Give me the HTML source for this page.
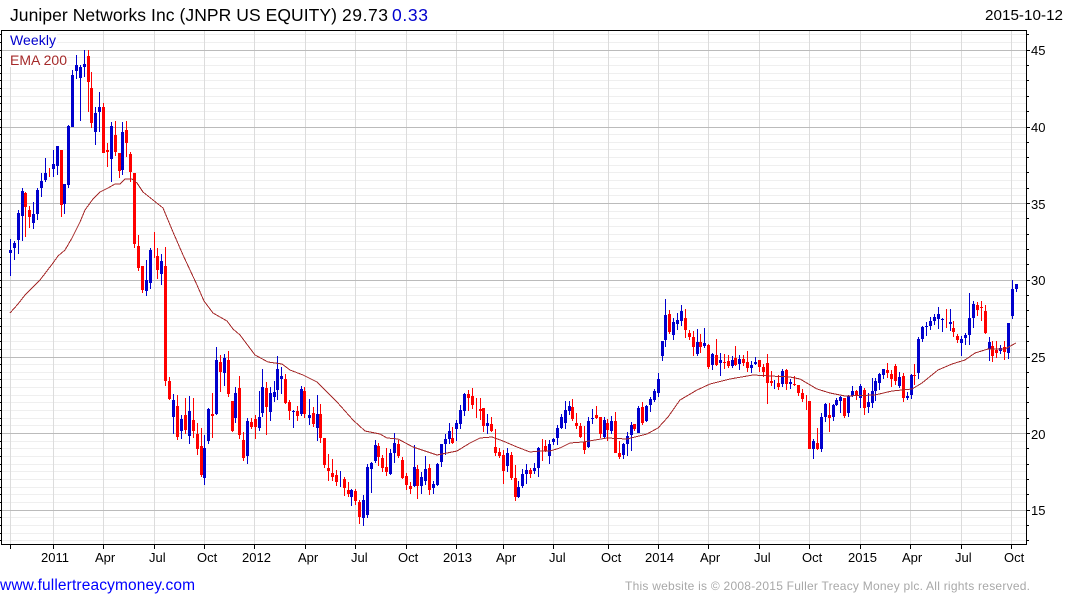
<!DOCTYPE html>
<html><head><meta charset="utf-8"><title>JNPR</title>
<style>html,body{margin:0;padding:0;background:#fff}svg{display:block}text{font-family:"Liberation Sans",Arial,sans-serif}</style></head>
<body>
<svg width="1075" height="600" viewBox="0 0 1075 600" xmlns="http://www.w3.org/2000/svg">
<rect width="1075" height="600" fill="#fff"/>
<g shape-rendering="crispEdges" fill="none">
<path stroke="#efefef" d="M2 34.5H1026M2 42.5H1026M2 57.5H1026M2 65.5H1026M2 73.5H1026M2 80.5H1026M2 88.5H1026M2 96.5H1026M2 103.5H1026M2 111.5H1026M2 119.5H1026M2 134.5H1026M2 142.5H1026M2 149.5H1026M2 157.5H1026M2 165.5H1026M2 172.5H1026M2 180.5H1026M2 188.5H1026M2 195.5H1026M2 211.5H1026M2 218.5H1026M2 226.5H1026M2 234.5H1026M2 241.5H1026M2 249.5H1026M2 257.5H1026M2 264.5H1026M2 272.5H1026M2 287.5H1026M2 295.5H1026M2 303.5H1026M2 310.5H1026M2 318.5H1026M2 326.5H1026M2 333.5H1026M2 341.5H1026M2 349.5H1026M2 364.5H1026M2 372.5H1026M2 379.5H1026M2 387.5H1026M2 395.5H1026M2 402.5H1026M2 410.5H1026M2 418.5H1026M2 425.5H1026M2 441.5H1026M2 448.5H1026M2 456.5H1026M2 464.5H1026M2 471.5H1026M2 479.5H1026M2 487.5H1026M2 494.5H1026M2 502.5H1026M2 517.5H1026M2 525.5H1026M2 533.5H1026M2 540.5H1026"/>
<path stroke="#dcdcdc" d="M10.5 31V544M53.5 31V544M103.5 31V544M154.5 31V544M204.5 31V544M254.5 31V544M305.5 31V544M355.5 31V544M406.5 31V544M456.5 31V544M503.5 31V544M553.5 31V544M608.5 31V544M658.5 31V544M708.5 31V544M759.5 31V544M809.5 31V544M860.5 31V544M910.5 31V544M961.5 31V544M1011.5 31V544"/>
<rect x="2" y="31" width="55" height="19" fill="#fff"/>
<rect x="2" y="50" width="65" height="17" fill="#fff"/>
<path stroke="#bbb" d="M2 50.5H1026M2 127.5H1026M2 203.5H1026M2 280.5H1026M2 357.5H1026M2 433.5H1026M2 510.5H1026"/>
<!-- blue wicks -->
<path stroke="#0000cd" d="M10.5 239V276M14.5 241V260M18.5 210V254M22.5 188V241M33.5 202V229M37.5 188V220M41.5 173V197M45.5 158V182M53.5 150V177M57.5 146V175M64.5 184V214M68.5 125V188M72.5 70V127M76.5 55V79M80.5 65V121M84.5 50V77M95.5 107V145M99.5 92V132M111.5 122V182M122.5 122V175M146.5 260V296M150.5 248V289M161.5 254V285M173.5 394V434M181.5 415V439M189.5 396V444M204.5 435V485M208.5 408V444M216.5 347V415M224.5 354V386M235.5 387V423M247.5 418V464M259.5 391V431M262.5 369V417M270.5 387V421M274.5 381V402M277.5 356V400M281.5 367V394M293.5 410V428M301.5 386V416M309.5 399V425M317.5 395V441M340.5 471V487M351.5 489V506M363.5 495V526M367.5 464V518M371.5 462V493M375.5 440V463M390.5 449V475M394.5 433V463M414.5 445V487M421.5 472V494M425.5 456V485M433.5 481V494M437.5 463V486M441.5 444V467M445.5 434V455M449.5 423V444M456.5 420V441M460.5 405V429M464.5 393V416M487.5 414V434M507.5 448V472M518.5 481V498M522.5 469V488M526.5 464V484M534.5 463V474M538.5 447V477M549.5 440V464M553.5 438V445M557.5 425V445M561.5 414V429M565.5 401V429M569.5 401V415M588.5 417V448M592.5 409V424M604.5 417V439M611.5 416V434M623.5 443V459M627.5 432V456M631.5 422V451M638.5 406V433M646.5 405V422M650.5 397V412M654.5 389V402M658.5 373V397M662.5 341V361M665.5 299V347M673.5 318V340M677.5 313V330M681.5 305V326M697.5 329V356M704.5 328V348M712.5 353V370M720.5 353V376M732.5 356V368M739.5 355V370M751.5 361V373M755.5 357V365M774.5 380V389M782.5 369V387M790.5 379V389M813.5 439V459M821.5 413V452M825.5 403V422M833.5 404V421M836.5 398V406M840.5 396V413M848.5 395V417M852.5 386V397M860.5 384V408M868.5 393V413M872.5 378V408M875.5 378V401M879.5 373V390M883.5 369V379M899.5 372V388M907.5 392V400M911.5 374V399M918.5 337V379M922.5 326V342M926.5 322V336M930.5 317V330M934.5 314V325M938.5 307V329M942.5 318V332M950.5 309V331M961.5 336V356M965.5 333V345M969.5 293V345M973.5 301V328M989.5 337V361M1000.5 345V354M1008.5 323V359M1012.5 280V319M1016.5 284V292"/>
<!-- red wicks -->
<path stroke="#ff0000" d="M25.5 192V237M29.5 206V228M49.5 168V177M61.5 150V217M88.5 50V112M91.5 72V128M103.5 103V153M107.5 143V167M115.5 121V156M119.5 153V178M126.5 121V157M130.5 152V182M134.5 173V248M138.5 235V271M142.5 266V293M154.5 232V258M157.5 248V279M165.5 247V386M169.5 377V400M177.5 395V440M185.5 398V434M193.5 398V438M197.5 423V455M201.5 428V477M212.5 393V438M220.5 355V392M228.5 351V397M232.5 401V432M239.5 376V439M243.5 432V461M251.5 418V429M255.5 415V439M266.5 382V435M285.5 374V404M289.5 400V420M297.5 406V421M304.5 387V418M313.5 407V427M320.5 404V443M324.5 438V468M328.5 454V481M332.5 459V481M336.5 470V486M344.5 477V496M348.5 482V497M355.5 489V505M359.5 500V524M378.5 443V466M382.5 455V472M386.5 448V476M398.5 440V458M402.5 457V479M406.5 473V490M410.5 482V494M417.5 465V499M429.5 464V495M452.5 427V444M468.5 390V411M472.5 388V409M476.5 398V418M480.5 398V420M483.5 408V432M491.5 417V432M495.5 429V456M499.5 448V458M503.5 450V484M511.5 452V480M515.5 465V501M530.5 468V478M542.5 439V461M545.5 440V452M572.5 399V421M576.5 413V429M580.5 423V438M584.5 426V454M596.5 406V419M600.5 417V438M607.5 419V441M615.5 412V453M619.5 441V459M634.5 424V431M642.5 402V425M669.5 310V334M685.5 309V338M689.5 330V340M693.5 331V356M700.5 334V353M708.5 344V369M716.5 339V366M724.5 354V369M728.5 355V368M735.5 346V366M743.5 355V366M747.5 351V372M759.5 360V372M763.5 364V377M767.5 354V404M771.5 371V386M778.5 375V390M786.5 369V390M794.5 376V386M798.5 385V396M802.5 389V402M806.5 395V410M809.5 401V449M817.5 428V450M829.5 403V432M844.5 398V418M856.5 390V400M864.5 388V415M887.5 363V378M891.5 370V387M895.5 364V385M903.5 373V402M914.5 364V385M946.5 309V328M953.5 321V337M957.5 334V343M977.5 302V316M981.5 301V321M985.5 305V334M992.5 341V362M996.5 341V358M1004.5 341V360"/>
<!-- blue bodies -->
<path stroke="#0000cd" stroke-width="3" d="M10.5 250V253M14.5 243V248M18.5 213V240M22.5 191V216M33.5 214V223M37.5 190V214M41.5 181V188M45.5 173V180M53.5 164V169M57.5 146V166M64.5 184V204M68.5 126V185M72.5 75V127M76.5 65V71M80.5 67V78M84.5 64V67M95.5 113V132M99.5 107V112M111.5 126V159M122.5 132V170M146.5 280V291M150.5 250V283M161.5 261V274M173.5 400V417M181.5 419V431M189.5 411V436M204.5 448V478M208.5 409V441M216.5 360V414M224.5 358V373M235.5 393V418M247.5 421V456M259.5 417V428M262.5 387V413M270.5 393V412M274.5 392V397M277.5 369V390M281.5 376V379M293.5 411V412M301.5 389V414M309.5 415V418M317.5 414V428M351.5 490V497M363.5 500V518M367.5 467V515M371.5 463V469M375.5 445V461M390.5 453V474M394.5 443V453M414.5 467V486M421.5 477V486M425.5 469V481M433.5 484V488M437.5 464V485M441.5 444V462M445.5 439V444M449.5 431V439M456.5 423V429M460.5 410V424M464.5 394V411M487.5 423V426M507.5 453V466M518.5 487V497M522.5 474V486M526.5 470V474M534.5 468V471M538.5 448V468M549.5 444V456M553.5 439V442M557.5 428V438M561.5 417V428M565.5 410V423M569.5 406V411M588.5 421V447M592.5 418V419M604.5 420V437M611.5 421V431M623.5 444V455M627.5 436V444M631.5 425V435M638.5 408V433M646.5 406V421M650.5 399V405M654.5 391V400M658.5 379V393M662.5 341V356M665.5 315V340M673.5 322V335M677.5 320V324M681.5 311V321M697.5 342V354M704.5 343V346M712.5 354V365M720.5 360V363M732.5 360V366M739.5 359V364M751.5 365V368M755.5 362V364M782.5 371V384M790.5 382V384M813.5 441V449M821.5 417V449M825.5 404V417M833.5 405V417M836.5 400V405M840.5 397V401M848.5 396V413M852.5 391V396M860.5 386V398M868.5 402V407M872.5 391V403M875.5 381V391M879.5 374V383M883.5 369V375M899.5 377V386M907.5 396V398M911.5 375V395M918.5 339V373M922.5 327V339M926.5 326V327M930.5 321V326M934.5 317V321M938.5 314V319M942.5 319V320M950.5 322V324M961.5 339V343M965.5 335V338M969.5 318V335M973.5 304V318M989.5 342V349M1000.5 348V351M1008.5 323V353M1012.5 289V316M1016.5 284V289"/>
<!-- red bodies -->
<path stroke="#ff0000" stroke-width="3" d="M25.5 193V207M29.5 210V217M61.5 150V205M88.5 56V82M91.5 88V123M103.5 107V153M107.5 150V152M115.5 135V152M119.5 153V171M126.5 130V143M130.5 154V172M134.5 173V244M138.5 246V268M142.5 266V290M157.5 256V270M165.5 266V381M169.5 381V399M177.5 406V437M185.5 415V430M193.5 420V431M197.5 434V449M201.5 446V475M212.5 414V416M220.5 362V372M228.5 360V394M232.5 401V431M239.5 388V435M243.5 440V458M251.5 422V427M255.5 419V427M266.5 388V407M285.5 379V403M289.5 402V411M297.5 411V416M304.5 391V414M313.5 413V424M320.5 414V438M324.5 438V465M328.5 468V471M332.5 473V477M336.5 475V482M344.5 479V488M348.5 490V494M355.5 491V501M359.5 502V517M378.5 446V457M382.5 458V468M386.5 467V472M398.5 444V456M402.5 460V478M406.5 476V485M410.5 486V489M417.5 469V486M429.5 468V490M452.5 438V443M468.5 394V398M472.5 396V405M480.5 409V411M483.5 408V426M491.5 424V431M495.5 447V453M499.5 452V456M503.5 455V471M511.5 455V478M515.5 478V497M530.5 470V474M545.5 446V451M572.5 407V419M576.5 423V426M580.5 426V437M584.5 442V450M596.5 415V418M600.5 417V434M607.5 423V430M615.5 421V453M619.5 453V457M634.5 424V429M642.5 407V423M669.5 314V332M685.5 318V330M689.5 333V337M693.5 337V347M700.5 342V347M708.5 345V367M716.5 355V365M724.5 362V363M728.5 361V366M735.5 358V365M743.5 359V363M747.5 362V368M759.5 360V367M763.5 367V372M767.5 363V383M771.5 381V383M778.5 383V387M786.5 370V384M794.5 384V385M798.5 385V393M802.5 393V399M809.5 401V449M817.5 443V449M829.5 415V418M844.5 398V416M856.5 391V396M864.5 390V408M887.5 370V373M891.5 374V379M895.5 366V381M903.5 376V398M914.5 375V376M953.5 328V332M957.5 336V340M977.5 305V310M981.5 307V308M985.5 311V333M992.5 346V356M996.5 350V353M1004.5 347V352"/>
<!-- EMA -->
<polyline stroke="#a52a2a" points="10,313 18,304 25,295 40,280 53,263 58,256 65,250 72,238 80,222 85,210 93,199 100,192 108,188 115,184 120,184 125,179 132,179 137,183 143,192 153,200 163,208 173,232 183,255 197,285 204,301 213,313 227,321 233,329 240,335 255,355 268,362 282,364 290,370 303,375 317,382 337,402 353,420 365,431 380,434 387,438 398,439 413,447 437,455 447,453 457,451 470,443 480,438 492,437 503,441 517,447 530,452 540,451 550,451 560,448 570,443 583,442 607,438 627,439 647,434 658,428 668,417 680,400 697,390 710,384 730,379 753,375 770,376 790,377 800,379 817,389 830,393 845,396 875,395 892,391 912,389 922,383 938,370 952,364 965,360 975,353 988,349 1005,349 1016,343"/>
<!-- frame & ticks -->
<path stroke="#000" d="M1 30.5H1027M1.5 30V545M1 544.5H1027M1026.5 30V545"/>
<path stroke="#000" d="M0 34.5H1M0 42.5H1M0 50.5H1M0 57.5H1M0 65.5H1M0 73.5H1M0 80.5H1M0 88.5H1M0 96.5H1M0 103.5H1M0 111.5H1M0 119.5H1M0 127.5H1M0 134.5H1M0 142.5H1M0 149.5H1M0 157.5H1M0 165.5H1M0 172.5H1M0 180.5H1M0 188.5H1M0 195.5H1M0 203.5H1M0 211.5H1M0 218.5H1M0 226.5H1M0 234.5H1M0 241.5H1M0 249.5H1M0 257.5H1M0 264.5H1M0 272.5H1M0 280.5H1M0 287.5H1M0 295.5H1M0 303.5H1M0 310.5H1M0 318.5H1M0 326.5H1M0 333.5H1M0 341.5H1M0 349.5H1M0 357.5H1M0 364.5H1M0 372.5H1M0 379.5H1M0 387.5H1M0 395.5H1M0 402.5H1M0 410.5H1M0 418.5H1M0 425.5H1M0 433.5H1M0 441.5H1M0 448.5H1M0 456.5H1M0 464.5H1M0 471.5H1M0 479.5H1M0 487.5H1M0 494.5H1M0 502.5H1M0 510.5H1M0 517.5H1M0 525.5H1M0 533.5H1M0 540.5H1"/>
<path stroke="#000" d="M1026 34.5H1029M1026 50.5H1030M1026 65.5H1029M1026 80.5H1029M1026 96.5H1029M1026 111.5H1029M1026 127.5H1030M1026 142.5H1029M1026 157.5H1029M1026 172.5H1029M1026 188.5H1029M1026 203.5H1030M1026 218.5H1029M1026 234.5H1029M1026 249.5H1029M1026 264.5H1029M1026 280.5H1030M1026 295.5H1029M1026 310.5H1029M1026 326.5H1029M1026 341.5H1029M1026 357.5H1030M1026 372.5H1029M1026 387.5H1029M1026 402.5H1029M1026 418.5H1029M1026 433.5H1030M1026 448.5H1029M1026 464.5H1029M1026 479.5H1029M1026 494.5H1029M1026 510.5H1030M1026 525.5H1029M1026 540.5H1029"/>
<path stroke="#000" d="M10.5 545V549M53.5 545V549M103.5 545V549M154.5 545V549M204.5 545V549M254.5 545V549M305.5 545V549M355.5 545V549M406.5 545V549M456.5 545V549M503.5 545V549M553.5 545V549M608.5 545V549M658.5 545V549M708.5 545V549M759.5 545V549M809.5 545V549M860.5 545V549M910.5 545V549M961.5 545V549M1011.5 545V549"/>
</g>
<!-- title -->
<text x="10" y="21" font-size="17.5" fill="#000" textLength="327" lengthAdjust="spacing">Juniper Networks Inc (JNPR US EQUITY)</text>
<text x="342" y="21" font-size="17.5" fill="#000" textLength="46" lengthAdjust="spacing">29.73</text>
<text x="392" y="21" font-size="17.5" fill="#0000cd" textLength="36" lengthAdjust="spacing">0.33</text>
<text x="985" y="20" font-size="15.2" fill="#000" textLength="78" lengthAdjust="spacing">2015-10-12</text>
<text x="10" y="45" font-size="14" fill="#0000cd" textLength="46" lengthAdjust="spacing">Weekly</text>
<text x="10" y="65" font-size="14" fill="#a52a2a" textLength="57" lengthAdjust="spacing">EMA 200</text>
<!-- y axis -->
<g font-size="13" fill="#000">
<text x="1031" y="55">45</text><text x="1031" y="132">40</text><text x="1031" y="209">35</text><text x="1031" y="285">30</text><text x="1031" y="362">25</text><text x="1031" y="439">20</text><text x="1031" y="515">15</text>
</g>
<!-- x axis -->
<g font-size="13" fill="#000">
<text x="41" y="562">2011</text><text x="95" y="562">Apr</text><text x="149" y="562">Jul</text><text x="197" y="562">Oct</text>
<text x="242" y="562">2012</text><text x="298" y="562">Apr</text><text x="351" y="562">Jul</text><text x="398" y="562">Oct</text>
<text x="443" y="562">2013</text><text x="496" y="562">Apr</text><text x="549" y="562">Jul</text><text x="601" y="562">Oct</text>
<text x="645" y="562">2014</text><text x="700" y="562">Apr</text><text x="754" y="562">Jul</text><text x="802" y="562">Oct</text>
<text x="848" y="562">2015</text><text x="902" y="562">Apr</text><text x="955" y="562">Jul</text><text x="1004" y="562">Oct</text>
</g>
<!-- footer -->
<text x="0" y="590" font-size="15.5" fill="#0000ff" textLength="195" lengthAdjust="spacing">www.fullertreacymoney.com</text>
<text x="625" y="590" font-size="12" fill="#a8a8a8" textLength="405" lengthAdjust="spacing">This website is © 2008-2015 Fuller Treacy Money plc. All rights reserved.</text>
</svg>
</body></html>
